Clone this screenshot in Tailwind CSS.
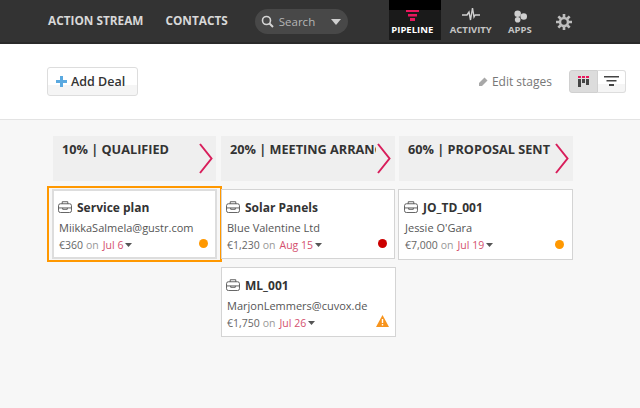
<!DOCTYPE html>
<html>
<head>
<meta charset="utf-8">
<script src="https://cdn.jsdelivr.net/npm/@tailwindcss/browser@4"></script>
</head>
<body class="w-[640px] h-[408px] overflow-hidden bg-[#f7f7f7] font-['Open_Sans',sans-serif]">
<header class="h-[44px] bg-[#333333] border-b-2 border-[#2a2a2a] flex items-start text-[#d8d8d8]">
  <nav class="flex items-center h-[42px] pl-[48px] gap-[22px] text-[11.800px] font-bold leading-none">
    <span>ACTION STREAM</span>
    <span>CONTACTS</span>
  </nav>
  <div class="ml-[27px] mt-[9px] w-[93px] h-[25px] rounded-full bg-[#484848] flex items-center pl-[6px] text-[11.500px] text-[#b5b5b5]">
    <svg width="13" height="13" viewBox="0 0 13 13" fill="none" stroke="#d5d5d5" stroke-width="1.600"><circle cx="5.500" cy="5.500" r="4"/><path d="M8.500 8.500 12 12" stroke-width="2"/></svg>
    <span class="ml-[5px]">Search</span>
    <svg class="ml-auto mr-[7px]" width="10" height="6" viewBox="0 0 10 6" fill="#cfcfcf"><path d="M0 0h10L5 6z"/></svg>
  </div>
  <div class="ml-[41px] w-[52px] h-[40px] bg-[#1a1a1a] flex flex-col items-center relative pr-[5px]">
    <div class="absolute inset-x-0 top-0 h-[10px] bg-black"></div>
    <svg class="relative mt-[10px]" width="13" height="11" viewBox="0 0 13 11" fill="#e8175d"><path d="M0 0h13v2H0zM2 4h9v2.500H2zM4 8h5v3H4z"/></svg>
    <span class="relative mt-[4px] text-[9.500px] font-bold leading-none text-white">PIPELINE</span>
  </div>
  <div class="ml-[9px] w-[42px] flex flex-col items-center shrink-0">
    <svg class="mt-[7px]" width="18" height="14" viewBox="0 0 18 14" fill="none" stroke="#d0d0d0" stroke-width="1.400"><path d="M0 8h5l2-3 1.500 8 2-12 1.500 9 1.200-2H18"/></svg>
    <span class="mt-[4px] text-[9.500px] font-bold leading-none text-[#c5c5c5]">ACTIVITY</span>
  </div>
  <div class="ml-[16px] w-[24px] flex flex-col items-center shrink-0">
    <svg class="mt-[10px]" width="14" height="13" viewBox="0 0 15 13" fill="#cfcfcf"><circle cx="5" cy="3.500" r="3.500"/><circle cx="11.500" cy="6.500" r="3.500"/><circle cx="5" cy="10" r="3"/></svg>
    <span class="mt-[2px] text-[9.500px] font-bold leading-none text-[#c5c5c5]">APPS</span>
  </div>
  <svg class="ml-[24px] mt-[14px] shrink-0" width="16" height="16" viewBox="0 0 17 17" fill="none" stroke="#bdbdbd"><circle cx="8.500" cy="8.500" r="4.200" stroke-width="2.600"/><path d="M8.500 0v3.500M8.500 13.500V17M0 8.500h3.500M13.500 8.500H17M2.500 2.500l2.500 2.500M12 12l2.500 2.500M14.500 2.500 12 5M5 12l-2.500 2.500" stroke-width="2.800"/></svg>
</header>
<section class="h-[76px] bg-white border-b border-[#e3e3e3] flex items-center pl-[47px] pr-[14px]">
  <button class="w-[91px] h-[29px] rounded-[3px] border border-[#dddddd] bg-[linear-gradient(#fff_0,#fff_62%,#f5f5f5_62%)] flex items-center pl-[8px] pt-[1px] text-[12.500px] font-semibold text-[#333333]">
    <svg class="-mt-[1px]" width="11" height="11" viewBox="0 0 11 11" fill="#5aa9e0"><path d="M4 0h3v4h4v3H7v4H4V7H0V4h4z"/></svg>
    <span class="ml-[4px]">Add Deal</span>
  </button>
  <svg class="ml-auto" width="10" height="10" viewBox="0 0 10 10" fill="#a8a8a8"><path d="M6.500 0.500 9.500 3.500 4 9H1V6z"/></svg>
  <span class="ml-[4px] text-[12px] text-[#777777]">Edit stages</span>
  <div class="ml-[17px] flex h-[23px]">
    <div class="w-[29px] bg-[#dcdcdc] border border-[#d0d0d0] rounded-l-[3px] flex items-center justify-center">
      <svg width="11" height="11" viewBox="0 0 11 11"><path fill="#e8175d" d="M0 0h3v2H0zM4 0h3v2H4zM8 0h3v2H8z"/><path fill="#444" d="M0 3h3v8H0zM4 3h3v4H4zM8 3h3v6H8z"/></svg>
    </div>
    <div class="w-[28px] bg-[linear-gradient(#fff_0,#fff_62%,#f5f5f5_62%)] border border-[#dddddd] border-l-0 rounded-r-[3px] flex items-center justify-center">
      <svg width="15" height="11" viewBox="0 0 15 11" fill="#444"><path d="M0 0h15v1.500H0zM2.500 4h10v1.500h-10zM5 8h5v2H5z"/></svg>
    </div>
  </div>
</section>
<main class="flex pl-[47px] pt-[16px] text-[#666666]">
  <section class="w-[174px]">
    <div class="ml-[6px] w-[163px] h-[45px] bg-[#efefef] relative pl-[9px] pt-[4px] text-[12.700px] font-bold text-[#333333] whitespace-nowrap overflow-hidden">
      <span>10% | QUALIFIED</span>
      <svg class="absolute right-[3px] top-[7px]" width="14" height="31" viewBox="0 0 14 31" fill="none" stroke="#d81e5b" stroke-width="2"><path d="M1 1 12.500 15.500 1 30"/></svg>
    </div>
    <div class="mt-[5px] w-[175px] h-[76px] border-2 border-[#ff9800] p-[1px] pl-[3px] pr-[3px]">
      <article class="h-[70px] bg-white border-2 border-[#dddddd] relative pl-[5px]">
        <h3 class="flex items-center pt-[7px] h-[27px] text-[12px] font-bold text-[#333333]">
          <svg class="-ml-[1px] -mt-[3px]" width="14" height="12" viewBox="0 0 15 13" fill="none" stroke="#555" stroke-width="1"><rect x="0.500" y="3" width="14" height="9.500" rx="2"/><path d="M4.500 3V0.800h6V3M0.500 7.500h14M5 7.500v1.500h5V7.500"/></svg>
          <span class="ml-[5px]">Service plan</span>
        </h3>
        <p class="mt-[2px] text-[11px] leading-[16px] text-[#555555] whitespace-nowrap">MiikkaSalmela@gustr.com</p>
        <p class="mt-[1px] flex items-center text-[10.500px] leading-[16px] whitespace-nowrap">€360<span class="ml-[3px] text-[#999999]">on</span><span class="ml-[4px] text-[#d4506e]">Jul 6</span><svg class="ml-[2px]" width="7" height="4" viewBox="0 0 7 4" fill="#555"><path d="M0 0h7L3.500 4z"/></svg></p>
        <span class="absolute right-[7px] bottom-[9px] size-[9px] rounded-full bg-[#ff9800]"></span>
      </article>
    </div>
  </section>
  <section class="w-[177px]">
    <div class="w-[174px] h-[45px] bg-[#efefef] relative pl-[9px] pt-[4px] text-[12.700px] font-bold text-[#333333] whitespace-nowrap overflow-hidden">
      <div class="w-[146px] overflow-hidden">20% | MEETING ARRANGED</div>
      <svg class="absolute right-[4px] top-[7px]" width="14" height="31" viewBox="0 0 14 31" fill="none" stroke="#d81e5b" stroke-width="2"><path d="M1 1 12.500 15.500 1 30"/></svg>
    </div>
    <article class="mt-[8px] w-[174px] h-[70px] bg-white border border-[#d4d4d4] relative pl-[5px]">
      <h3 class="flex items-center pt-[8px] h-[28px] text-[12px] font-bold text-[#333333]">
        <svg class="-ml-[1px] -mt-[3px]" width="14" height="12" viewBox="0 0 15 13" fill="none" stroke="#555" stroke-width="1"><rect x="0.500" y="3" width="14" height="9.500" rx="2"/><path d="M4.500 3V0.800h6V3M0.500 7.500h14M5 7.500v1.500h5V7.500"/></svg>
        <span class="ml-[5px]">Solar Panels</span>
      </h3>
      <p class="mt-[2px] text-[11px] leading-[16px] text-[#555555] whitespace-nowrap">Blue Valentine Ltd</p>
      <p class="mt-[1px] flex items-center text-[10.500px] leading-[16px] whitespace-nowrap">€1,230<span class="ml-[3px] text-[#999999]">on</span><span class="ml-[4px] text-[#d4506e]">Aug 15</span><svg class="ml-[2px]" width="7" height="4" viewBox="0 0 7 4" fill="#555"><path d="M0 0h7L3.500 4z"/></svg></p>
      <span class="absolute right-[7px] bottom-[10px] size-[9px] rounded-full bg-[#cc0000]"></span>
    </article>
    <article class="mt-[8px] w-[175px] h-[70px] bg-white border border-[#d4d4d4] relative pl-[5px]">
      <h3 class="flex items-center pt-[8px] h-[28px] text-[12px] font-bold text-[#333333]">
        <svg class="-ml-[1px] -mt-[3px]" width="14" height="12" viewBox="0 0 15 13" fill="none" stroke="#555" stroke-width="1"><rect x="0.500" y="3" width="14" height="9.500" rx="2"/><path d="M4.500 3V0.800h6V3M0.500 7.500h14M5 7.500v1.500h5V7.500"/></svg>
        <span class="ml-[5px]">ML_001</span>
      </h3>
      <p class="mt-[2px] text-[11px] leading-[16px] text-[#555555] whitespace-nowrap">MarjonLemmers@cuvox.de</p>
      <p class="mt-[1px] flex items-center text-[10.500px] leading-[16px] whitespace-nowrap">€1,750<span class="ml-[3px] text-[#999999]">on</span><span class="ml-[4px] text-[#d4506e]">Jul 26</span><svg class="ml-[2px]" width="7" height="4" viewBox="0 0 7 4" fill="#555"><path d="M0 0h7L3.500 4z"/></svg></p>
      <svg class="absolute right-[6px] bottom-[9px]" width="13" height="12" viewBox="0 0 13 12"><path fill="#f7941d" d="M6.500 0 13 12H0z"/><path fill="#fff" d="M5.800 4h1.400v4H5.800zM5.800 9h1.400v1.500H5.800z"/></svg>
    </article>
  </section>
  <section class="w-[175px]">
    <div class="ml-[1px] w-[174px] h-[45px] bg-[#efefef] relative pl-[9px] pt-[4px] text-[12.700px] font-bold text-[#333333] whitespace-nowrap overflow-hidden">
      <span>60% | PROPOSAL SENT</span>
      <svg class="absolute right-[4px] top-[7px]" width="14" height="31" viewBox="0 0 14 31" fill="none" stroke="#d81e5b" stroke-width="2"><path d="M1 1 12.500 15.500 1 30"/></svg>
    </div>
    <article class="mt-[8px] w-[175px] h-[71px] bg-white border border-[#d4d4d4] relative pl-[6px]">
      <h3 class="flex items-center pt-[8px] h-[28px] text-[12px] font-bold text-[#333333]">
        <svg class="-ml-[1px] -mt-[3px]" width="14" height="12" viewBox="0 0 15 13" fill="none" stroke="#555" stroke-width="1"><rect x="0.500" y="3" width="14" height="9.500" rx="2"/><path d="M4.500 3V0.800h6V3M0.500 7.500h14M5 7.500v1.500h5V7.500"/></svg>
        <span class="ml-[5px]">JO_TD_001</span>
      </h3>
      <p class="mt-[2px] text-[11px] leading-[16px] text-[#555555] whitespace-nowrap">Jessie O'Gara</p>
      <p class="mt-[1px] flex items-center text-[10.500px] leading-[16px] whitespace-nowrap">€7,000<span class="ml-[3px] text-[#999999]">on</span><span class="ml-[4px] text-[#d4506e]">Jul 19</span><svg class="ml-[2px]" width="7" height="4" viewBox="0 0 7 4" fill="#555"><path d="M0 0h7L3.500 4z"/></svg></p>
      <span class="absolute right-[8px] bottom-[10px] size-[9px] rounded-full bg-[#ff9800]"></span>
    </article>
  </section>
</main>
</body>
</html>
